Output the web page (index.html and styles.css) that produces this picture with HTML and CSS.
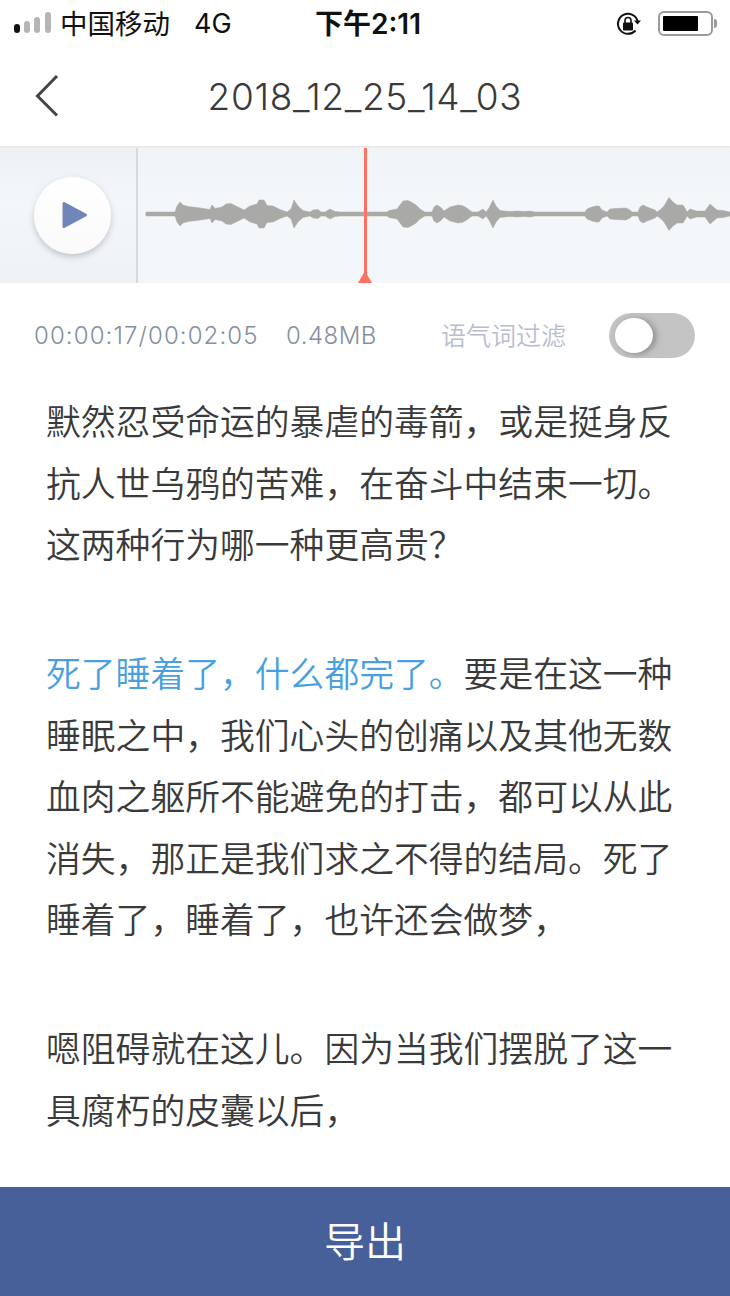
FILE: index.html
```html
<!DOCTYPE html>
<html lang="zh-CN">
<head>
<meta charset="utf-8">
<title>2018_12_25_14_03</title>
<link rel="stylesheet" href="styles.css">
</head>
<body>
<div class="page">
  <header class="status">
    <div class="status-left">
      <svg class="signal" width="38" height="30" viewBox="0 0 38 30">
        <rect x="0" y="15" width="6" height="9" rx="3" fill="#111"/>
        <rect x="10" y="12" width="6" height="12" rx="3" fill="#b5b5b5"/>
        <rect x="20" y="8" width="6" height="16" rx="3" fill="#b5b5b5"/>
        <rect x="31" y="3" width="6" height="21" rx="3" fill="#b5b5b5"/>
      </svg>
      <span class="carrier">中国移动</span>
      <span class="network">4G</span>
    </div>
    <div class="clock">下午2:11</div>
    <div class="status-right">
      <svg class="lock" width="26" height="26" viewBox="0 0 26 26">
        <path d="M20.500 19.500A10 10 0 1 1 22.600 10" fill="none" stroke="#111" stroke-width="2"/>
        <path d="M19 9.500h7l-3.500 4z" fill="#111"/>
        <rect x="8" y="11.500" width="10" height="8" rx="1" fill="#111"/>
        <path d="M10 12V9.500a3 3 0 0 1 6 0V12" fill="none" stroke="#111" stroke-width="1.600"/>
      </svg>
      <div class="battery"><div class="battery-level"></div></div>
      <div class="battery-nub"></div>
    </div>
  </header>

  <nav class="nav">
    <svg class="back" width="24" height="44" viewBox="0 0 24 44">
      <path d="M22 2 2.500 22 22 41.500" fill="none" stroke="#444" stroke-width="3"/>
    </svg>
    <h1 class="title">2018_12_25_14_03</h1>
  </nav>

  <section class="player">
    <div class="play-panel">
      <div class="play-button">
        <svg width="26" height="28" viewBox="0 0 26 28">
          <path d="M2 2.500 23.500 14 2 25.500z" fill="#7186b8" stroke="#7186b8" stroke-width="3" stroke-linejoin="round"/>
        </svg>
      </div>
    </div>
    <div class="wave-panel">
      <svg class="wave" width="592" height="135" viewBox="138 -66 592 135">
        <defs>
          <polygon id="wave-half" points="146,1 146,-2 175,-2 177,-8 180,-12 183,-9 188,-7.500 197,-6.500 210,-4.500 212,-9 215,-5.500 222,-7 226,-10 231,-10.500 236,-8 244,-4 250,-8 257,-10 259,-14 264,-14 267,-8.500 273,-8 280,-4.500 287,-2 291,-5 294,-14 298,-8 303,-3.500 310,-2 313,-4 318,-4.500 321,-2 325,-2 330,-5 335,-2.500 340,-2 387,-2 389,-3.500 397,-5 400,-9 403,-13 408,-13.500 412,-11.500 416,-9 420,-5 425,-2 432,-2 434,-7 437,-9 441,-6.500 444,-3 450,-7 454,-8 458,-9 462,-8.500 466,-6.500 470,-3.500 472,-2 478,-2 483,-5 486,-2 489,-6 493,-14 496,-8 500,-3.500 510,-2.500 517,-3 525,-2.500 530,-3 535,-2 585,-2 587,-5 592,-7 596,-8 599,-8 602,-4 607,-2 610,-5 615,-5.500 626,-6 630,-4 632,-2 638,-2 640,-7 643,-9 647,-7 655,-4 657,-2 660,-4 664,-8 669,-16.500 673,-12 677,-9 683,-9 686,-4 687,-2 690,-5 697,-3 705,-3 710,-10 717,-4 723,-3.500 730,-2 730,1"/>
        </defs>
        <use href="#wave-half" class="wave-shape"/>
        <use href="#wave-half" class="wave-shape" transform="scale(1,-1)"/>
      </svg>
      <div class="playhead"></div>
      <div class="playhead-mark"></div>
    </div>
  </section>

  <section class="meta">
    <span class="time">00:00:17/00:02:05</span>
    <span class="size">0.48MB</span>
    <span class="filter">语气词过滤</span>
    <div class="toggle"><div class="knob"></div></div>
  </section>

  <article class="transcript">
    <p>默然忍受命运的暴虐的毒箭，或是挺身反抗人世乌鸦的苦难，在奋斗中结束一切。这两种行为哪一种更高贵？</p>
    <p><span class="active">死了睡着了，什么都完了。</span>要是在这一种睡眠之中，我们心头的创痛以及其他无数血肉之躯所不能避免的打击，都可以从此消失，那正是我们求之不得的结局。死了睡着了，睡着了，也许还会做梦，</p>
    <p>嗯阻碍就在这儿。因为当我们摆脱了这一具腐朽的皮囊以后，</p>
  </article>

  <footer class="export">导出</footer>
</div>
</body>
</html>
```
FILE: styles.css
```css
* { box-sizing: border-box; }
html, body { margin: 0; padding: 0; background: #fff; }
body { font-family: "Inter", "Noto Sans CJK SC", sans-serif; }
.page { width: 730px; height: 1296px; display: flex; flex-direction: column; overflow: hidden; }

.status { height: 48px; flex: none; display: flex; align-items: center; justify-content: space-between; position: relative; padding: 0 13px 0 14px; color: #111; font-size: 27.500px; }
.status-left { display: flex; align-items: center; }
.signal { margin-right: 8px; }
.carrier { width: 134px; margin-bottom: 5px; }
.network { font-size: 27px; margin-bottom: 1px; }
.clock { position: absolute; left: 315px; margin-bottom: 5px; font-weight: 600; font-size: 28px; }
.status-right { display: flex; align-items: center; margin-bottom: 1px; }
.lock { margin-right: 17px; }
.battery { width: 55px; height: 25px; border: 2px solid #9a9a9a; border-radius: 6px; padding: 3px; }
.battery-level { width: 35px; height: 100%; background: #000; border-radius: 1px; }
.battery-nub { width: 3px; height: 9px; background: #9a9a9a; margin-left: 1px; border-radius: 0 3px 3px 0; }

.nav { height: 100px; flex: none; display: flex; align-items: center; justify-content: center; position: relative; border-bottom: 2px solid #e9e9e9; }
.back { position: absolute; left: 35px; top: 26px; }
.title { margin: 0 0 2px; font-weight: 350; font-size: 37px; letter-spacing: .65px; color: #3a3a3a; }

.player { height: 135px; display: flex; flex: none; }
.play-panel { width: 138px; display: flex; align-items: center; justify-content: center; background: linear-gradient(#eef1f4, #f4f7fa 40%, #eff2f5); border-right: 2px solid #d6d9dd; padding-left: 8px; }
.play-button { width: 77px; height: 77px; margin-bottom: 1px; border-radius: 50%; background: linear-gradient(#fff, #fafafa); box-shadow: 0 3px 6px rgba(120,125,135,.4); display: flex; align-items: center; justify-content: center; padding-left: 6px; }
.wave-panel { flex: 1; position: relative; background: linear-gradient(#f1f4f6, #f4f7fa 40%); }
.wave { display: block; position: absolute; left: 0; top: 0; }
.wave-shape { fill: #a9a9a7; stroke: #a9a9a7; stroke-width: .5; stroke-linejoin: round; }
.playhead { position: absolute; left: 226px; top: 0; bottom: 0; width: 2.500px; background: #ff7262; }
.playhead-mark { position: absolute; left: 220px; bottom: 0; width: 0; height: 0; border-left: 7px solid transparent; border-right: 7px solid transparent; border-bottom: 12px solid #ff7262; }

.meta { height: 105px; flex: none; display: flex; align-items: center; padding: 0 35px 0 34px; color: #858f9f; font-size: 24px; font-weight: 350; }
.time { width: 252px; letter-spacing: 1.100px; }
.size { width: 155px; letter-spacing: .5px; }
.filter { width: 168px; margin-bottom: 3px; color: #b9bdd0; font-size: 25px; }
.toggle { width: 86px; height: 45px; border-radius: 23px; background: #c4c4c4; padding: 5px 6px; flex: none; }
.knob { width: 38px; height: 35px; border-radius: 50%; background: #fff; box-shadow: 3px 1px 6px rgba(90,90,90,.55); }

.transcript { flex: 1; min-height: 0; padding: 0 56px 0 46px; font-size: 34.800px; font-weight: 350; line-height: 61.500px; color: #3a3a3a; margin-top: 4px; }
.transcript p { margin: 0 0 67.500px; }
.transcript p:last-child { margin-bottom: 0; }
.active { color: #4a9fe0; }

.export { height: 109px; flex: none; padding-bottom: 5px; background: #47609a; color: #fff; font-size: 41px; font-weight: 350; display: flex; align-items: center; justify-content: center; }
```
